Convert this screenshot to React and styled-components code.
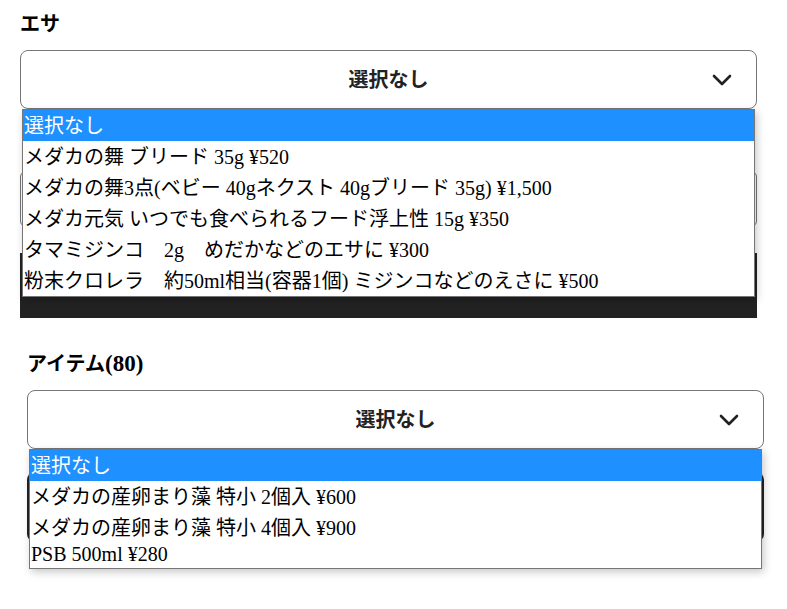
import React from 'react';
import styled, { createGlobalStyle } from 'styled-components';

const Global = createGlobalStyle`
  html, body { margin: 0; padding: 0; background: #fff; }
  body { font-family: "Liberation Serif", "Noto Sans CJK JP", serif; color: #000; }
`;

const Page = styled.div`
  padding: 8px 0 80px;
  min-height: 609px;
  box-sizing: border-box;
  display: flex;
  flex-direction: column;
`;

const Section = styled.section`
  margin-left: ${p => p.$indent}px;
  margin-top: ${p => p.$top || 0}px;
  width: 737px;
  display: flex;
  flex-direction: column;
`;

const Label = styled.h3`
  margin: 0;
  font-family: "Liberation Serif", "Noto Sans CJK JP", serif;
  font-weight: bold;
  font-size: 20px;
  line-height: 33px;
  color: #000;
`;

const Count = styled.span`
  font-size: 23px;
`;

const SelectWrap = styled.div`
  position: relative;
  margin-top: 9px;
`;

const SelectBox = styled.div`
  height: 59px;
  box-sizing: border-box;
  border: 1px solid #767676;
  border-radius: 8px;
  background: #fff;
  display: grid;
  grid-template-columns: 1fr auto 1fr;
  align-items: center;
  padding: 0 24px 3px;
  font-family: "Noto Sans CJK JP", sans-serif;
  font-weight: bold;
  font-size: 20px;
  color: #222;
`;

const Chevron = styled.svg`
  justify-self: end;
  display: block;
  margin-top: 3px;
`;

const List = styled.ul`
  position: absolute;
  top: 100%;
  left: 2px;
  right: 2px;
  margin: 0;
  padding: 0;
  list-style: none;
  background: #fff;
  border: 1px solid #767676;
  box-shadow: 2px 3px 8px rgba(0, 0, 0, 0.22);
  z-index: 10;
`;

const Option = styled.li`
  padding: 0 1px 2px;
  font-family: "Liberation Serif", "Noto Sans CJK JP", serif;
  font-size: 20px;
  line-height: normal;
  white-space: pre;
  background: ${p => (p.$selected ? '#1e90ff' : '#fff')};
  color: ${p => (p.$selected ? '#fff' : '#000')};
`;

const QtyBox = styled.div`
  margin-top: 62px;
  height: 56px;
  box-sizing: border-box;
  border: 1px solid #767676;
  border-radius: 6px;
  background: #fff;
`;

const DarkButton = styled.button`
  margin-top: ${p => p.$top}px;
  height: ${p => p.$h}px;
  border: none;
  border-radius: ${p => p.$radius}px;
  background: #222;
  color: #fff;
  font-family: "Noto Sans CJK JP", sans-serif;
  font-size: 18px;
  font-weight: bold;
`;

const ChevronIcon = () => (
  <Chevron width="20" height="12" viewBox="0 0 20 12">
    <path d="M2 2 L10 10 L18 2" fill="none" stroke="#222" strokeWidth="2.6" strokeLinecap="round" strokeLinejoin="round" />
  </Chevron>
);

const Dropdown = ({ options }) => (
  <SelectWrap>
    <SelectBox>
      <span />
      <span>選択なし</span>
      <ChevronIcon />
    </SelectBox>
    <List>
      {options.map((o, i) => (
        <Option key={i} $selected={i === 0}>{o}</Option>
      ))}
    </List>
  </SelectWrap>
);

const esa = [
  '選択なし',
  'メダカの舞 ブリード 35g ¥520',
  'メダカの舞3点(ベビー 40gネクスト 40gブリード 35g) ¥1,500',
  'メダカ元気 いつでも食べられるフード浮上性 15g ¥350',
  'タマミジンコ　2g　めだかなどのエサに ¥300',
  '粉末クロレラ　約50ml相当(容器1個) ミジンコなどのえさに ¥500',
];

const items = [
  '選択なし',
  'メダカの産卵まり藻 特小 2個入 ¥600',
  'メダカの産卵まり藻 特小 4個入 ¥900',
  'PSB 500ml ¥280',
];

export default function App() {
  return (
    <Page>
      <Global />
      <Section $indent={20}>
        <Label>エサ</Label>
        <Dropdown options={esa} />
        <QtyBox />
        <DarkButton $top={26} $h={65} $radius={0} />
      </Section>
      <Section $indent={27} $top={29}>
        <Label>アイテム<Count>(80)</Count></Label>
        <Dropdown options={items} />
        <DarkButton $top={23} $h={70} $radius={8} />
      </Section>
    </Page>
  );
}
